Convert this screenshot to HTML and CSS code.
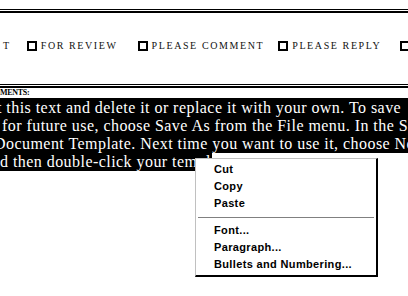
FILE: index.html
```html
<!DOCTYPE html>
<html lang="en">
<head>
    <meta charset="UTF-8">
    <title>Routing Slip</title>
    <link rel="stylesheet" href="styles.css">
</head>
<body>
    <div class="page">
        <!-- Routing options -->
        <div class="double-rule"></div>
        <div class="routing">
            <span class="option first">T</span>
            <span class="option review"><span class="box"></span>FOR REVIEW</span>
            <span class="option comment"><span class="box"></span>PLEASE COMMENT</span>
            <span class="option reply"><span class="box"></span>PLEASE REPLY</span>
            <span class="option"><span class="box"></span>PLEASE RECYCLE</span>
        </div>
        <div class="double-rule"></div>

        <!-- Comments -->
        <div class="comments-label">MENTS:</div>
        <div class="selection">
            <div class="line line-1">t this text and delete it or replace it with your own. To save</div>
            <div class="line line-2">for future use, choose Save As from the File menu. In the Save</div>
            <div class="line line-3">Document Template. Next time you want to use it, choose New</div>
            <div class="line line-4">d then double-click your template.</div>
        </div>
    </div>

    <!-- Context menu -->
    <div class="context-menu">
        <div class="menu-item">Cut</div>
        <div class="menu-item">Copy</div>
        <div class="menu-item">Paste</div>
        <div class="menu-separator"></div>
        <div class="menu-item">Font...</div>
        <div class="menu-item">Paragraph...</div>
        <div class="menu-item">Bullets and Numbering...</div>
    </div>
</body>
</html>
```

FILE: styles.css
```css
/* General Styles */
body {
    margin: 0;
    background-color: #fff;
    font-family: "Liberation Serif", serif;
    overflow: hidden;
}

.page {
    width: 408px;
    height: 296px;
    padding-top: 9px;
    box-sizing: border-box;
    overflow: hidden;
}

.double-rule {
    height: 1px;
    border-top: 1px solid #000;
    border-bottom: 2px solid #000;
}

/* Routing row */
.routing {
    display: flex;
    align-items: center;
    height: 71px;
    padding-bottom: 6px;
    box-sizing: border-box;
    white-space: nowrap;
    font-size: 10px;
    letter-spacing: 1.6px;
    color: #111;
}

.option {
    display: flex;
    align-items: center;
    flex-shrink: 0;
}

.option.first {
    margin-left: 3px;
    margin-right: 16px;
}

.option.review {
    margin-right: 20px;
}

.option.comment {
    margin-right: 14px;
}

.option.reply {
    margin-right: 19px;
}

.box {
    width: 6px;
    height: 6px;
    border: 2px solid #000;
    margin-right: 4px;
}

/* Comments */
.comments-label {
    font-size: 8px;
    font-weight: bold;
    letter-spacing: -0.3px;
    line-height: 10px;
    height: 10px;
    border-bottom: 1px solid #000;
}

.selection {
    color: #fff;
    font-size: 16px;
    letter-spacing: 0.45px;
    line-height: 18px;
}

.line {
    background-color: #000;
    white-space: nowrap;
    overflow: hidden;
}

.line-1 {
    text-indent: -3px;
}

.line-2 {
    text-indent: 2px;
}

.line-3 {
    text-indent: -6px;
}

.line-4 {
    width: 212px;
}

/* Context menu */
.context-menu {
    position: absolute;
    left: 195px;
    top: 158px;
    width: 180px;
    padding: 2px 0;
    background-color: #fff;
    border-top: 1px solid #c0c0c0;
    border-left: 1px solid #c0c0c0;
    border-right: 2px solid #000;
    border-bottom: 2px solid #000;
    font-family: "Liberation Sans", Arial, sans-serif;
    font-size: 11px;
    font-weight: bold;
    letter-spacing: 0.35px;
    color: #000;
}

.menu-item {
    height: 17px;
    line-height: 17px;
    padding-left: 18px;
}

.menu-separator {
    margin: 5px 2px 3px;
    border-top: 1px solid #808080;
    border-bottom: 1px solid #fff;
}
```
